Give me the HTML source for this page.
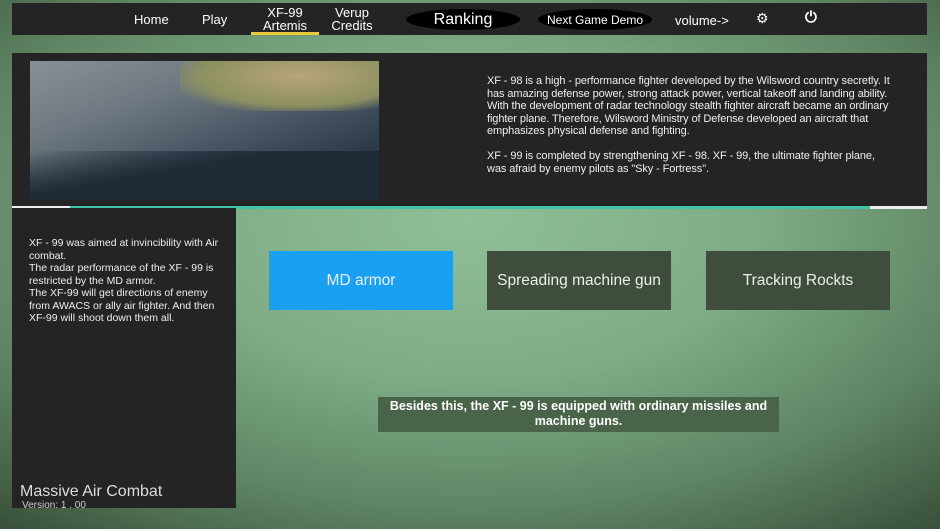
<!DOCTYPE html>
<html><head><style>
*{margin:0;padding:0;box-sizing:border-box}
body{width:940px;height:529px;overflow:hidden;position:relative;font-family:"Liberation Sans",sans-serif;color:#fff;
background:radial-gradient(ellipse 720px 400px at 470px 220px,#8fbf98 0%,#7eac86 40%,#5f8564 72%,#3a523b 100%);}
.abs{position:absolute}
.nav{left:12px;top:3px;width:915px;height:32px;background:#242424;font-size:13px}
.nav span{position:absolute;text-align:center;line-height:13px}
.pill{background:#000;border-radius:50%/50%;}
.top{left:12px;top:53px;width:915px;height:155px;background:#242424}
.img{left:30px;top:61px;width:349px;height:139px;background:linear-gradient(160deg,#8a8f96 0%,#6f7880 30%,#4b5866 55%,#2c3a48 80%,#3a4450 100%)}
.desc{left:487px;top:75px;width:408px;font-size:11px;line-height:12.5px;color:#eee;letter-spacing:-0.1px}
.left{left:12px;top:208px;width:224px;height:300px;background:#242424}
.btn{top:251px;height:59px;width:184px;font-size:15.5px;display:flex;align-items:center;justify-content:center;color:#eee}
</style></head><body>
<div class="abs nav">
<span style="left:122px;top:10px">Home</span>
<span style="left:190px;top:10px">Play</span>
<span style="left:240px;top:3px;width:66px">XF-99<br>Artemis</span>
<div class="abs" style="left:239px;top:29px;width:68px;height:3px;background:#e8c93a"></div>
<span style="left:318px;top:3px;width:44px">Verup<br>Credits</span>
<div class="abs pill" style="left:394px;top:6px;width:114px;height:21px"></div>
<span style="left:394px;top:10px;width:114px;font-size:16px">Ranking</span>
<div class="abs pill" style="left:526px;top:6px;width:114px;height:21px"></div>
<span style="left:526px;top:11px;width:114px;font-size:12px">Next Game Demo</span>
<span style="left:663px;top:11px">volume-&gt;</span>
<span style="left:744px;top:9px;font-size:14px">⚙</span>
<span style="left:793px;top:8px;font-size:15px;font-weight:bold">⏻</span>
</div>
<div class="abs top"></div>
<div class="abs img">
<div class="abs" style="left:150px;top:0;width:199px;height:50px;background:radial-gradient(ellipse at 60% 30%,#b7a57a,#8c9060 60%,transparent 80%)"></div>
<div class="abs" style="left:0;top:90px;width:349px;height:49px;background:linear-gradient(170deg,transparent 0%,#1f2c38 40%)"></div>
</div>
<div class="abs desc">XF - 98 is a high - performance fighter developed by the Wilsword country secretly. It has amazing defense power, strong attack power, vertical takeoff and landing ability. With the development of radar technology stealth fighter aircraft became an ordinary fighter plane. Therefore, Wilsword Ministry of Defense developed an aircraft that emphasizes physical defense and fighting.<br><br>XF - 99 is completed by strengthening XF - 98. XF - 99, the ultimate fighter plane, was afraid by enemy pilots as "Sky - Fortress".</div>
<div class="abs" style="left:12px;top:206px;width:915px;height:3px;background:#eee"></div>
<div class="abs" style="left:70px;top:206px;width:800px;height:3px;background:#3cc4a8"></div>
<div class="abs left"></div>
<div class="abs" style="left:29px;top:237px;width:196px;font-size:10.5px;line-height:12.5px;color:#eee">XF - 99 was aimed at invincibility with Air combat.<br>The radar performance of the XF - 99 is restricted by the MD armor.<br>The XF-99 will get directions of enemy from AWACS or ally air fighter. And then XF-99 will shoot down them all.</div>
<div class="abs" style="left:20px;top:483px;font-size:16px;color:#ddd">Massive Air Combat</div>
<div class="abs" style="left:22px;top:500px;font-size:10px;color:#ccc">Version: 1 . 00</div>
<div class="abs btn" style="left:269px;background:#1aa0f2">MD armor</div>
<div class="abs btn" style="left:487px;background:#3e4d3c">Spreading machine gun</div>
<div class="abs btn" style="left:706px;background:#3e4d3c">Tracking Rockts</div>
<div class="abs" style="left:378px;top:397px;width:401px;height:35px;background:#4a6449;font-size:12.5px;font-weight:bold;text-align:center;line-height:15px;padding-top:2px">Besides this, the XF - 99 is equipped with ordinary missiles and machine guns.</div>
</body></html>
